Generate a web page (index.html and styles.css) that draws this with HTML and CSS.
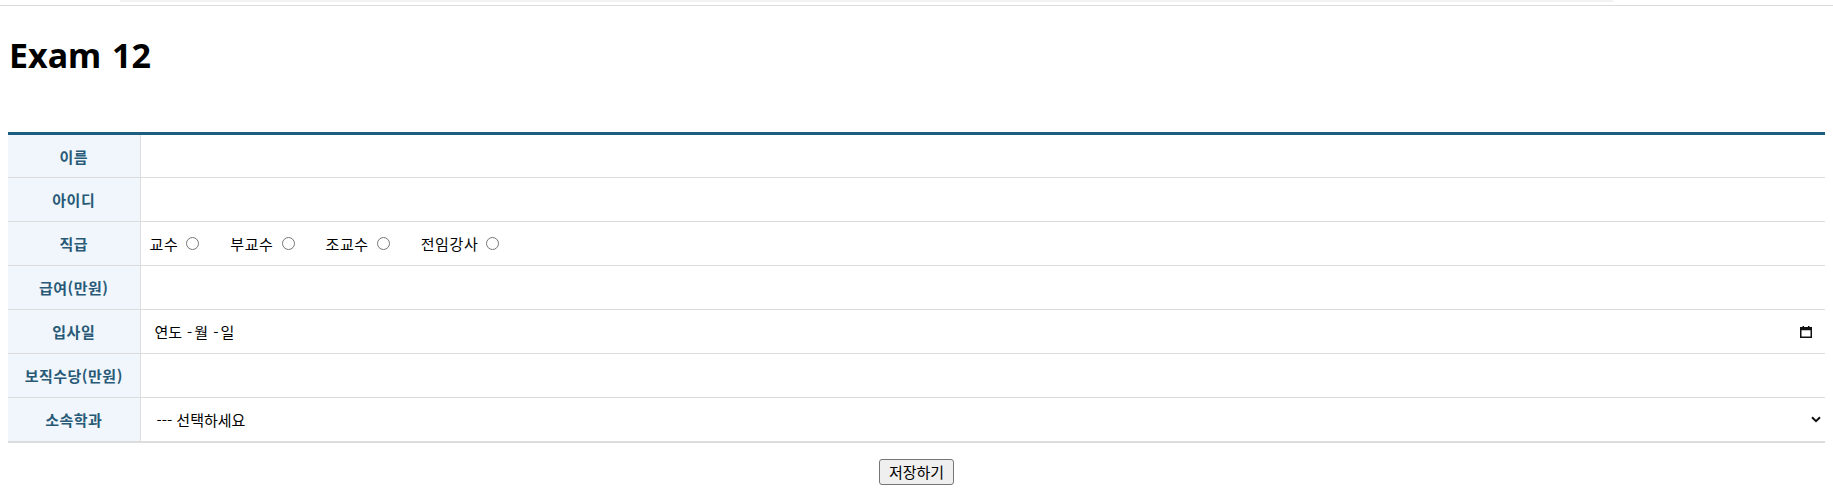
FILE: index.html
```html
<!DOCTYPE html>
<html lang="ko">
<head>
<meta charset="utf-8">
<title>Exam 12</title>
<link rel="stylesheet" href="styles.css">
</head>
<body>
<div class="topbar"><div class="topbar-strip"></div></div>
<main class="page">
  <h1 class="title">Exam 12</h1>
  <form class="form">
    <table class="form-table">
      <tr>
        <th>이름</th>
        <td><input type="text" class="field"></td>
      </tr>
      <tr>
        <th>아이디</th>
        <td><input type="text" class="field"></td>
      </tr>
      <tr>
        <th>직급</th>
        <td>
          <div class="radios">
            <label class="radio">교수<input type="radio" name="pos"></label>
            <label class="radio">부교수<input type="radio" name="pos"></label>
            <label class="radio">조교수<input type="radio" name="pos"></label>
            <label class="radio">전임강사<input type="radio" name="pos"></label>
          </div>
        </td>
      </tr>
      <tr>
        <th>급여(만원)</th>
        <td><input type="text" class="field"></td>
      </tr>
      <tr>
        <th>입사일</th>
        <td class="cell-date">
          <div class="date">
            <span class="date-text">연도<span class="date-sep">-</span>월<span class="date-sep">-</span>일</span>
            <svg class="date-icon" width="12" height="12" viewBox="0 0 12 12" aria-hidden="true">
              <rect x="0.75" y="1.75" width="10.5" height="9.5" fill="none" stroke="#111" stroke-width="1.5"/>
              <rect x="0.75" y="1.75" width="10.5" height="2.5" fill="#111"/>
              <rect x="2.5" y="0" width="1.5" height="2" fill="#111"/>
              <rect x="8" y="0" width="1.5" height="2" fill="#111"/>
            </svg>
          </div>
        </td>
      </tr>
      <tr>
        <th>보직수당(만원)</th>
        <td><input type="text" class="field"></td>
      </tr>
      <tr>
        <th>소속학과</th>
        <td class="cell-select">
          <div class="select-wrap">
            <select class="select">
              <option>--- 선택하세요</option>
            </select>
            <svg class="chevron" width="10" height="7" viewBox="0 0 10 7" aria-hidden="true">
              <path d="M1 1.2 L5 5.2 L9 1.2" fill="none" stroke="#111" stroke-width="2"/>
            </svg>
          </div>
        </td>
      </tr>
    </table>
    <div class="actions">
      <button type="submit" class="btn">저장하기</button>
    </div>
  </form>
</main>
</body>
</html>
```

FILE: styles.css
```css
html, body {
  margin: 0;
  padding: 0;
  background: #fff;
}

body {
  font-family: "Noto Sans CJK KR", "Noto Sans", sans-serif;
  color: #000;
}

.topbar {
  height: 5px;
  border-bottom: 1px solid #dcdcdc;
  padding-left: 120px;
}

.topbar-strip {
  width: 1493px;
  height: 2px;
  background: #f3f3f3;
}

.page {
  padding: 0 8px;
}

.title {
  font-family: "Noto Sans", "Noto Sans CJK KR", sans-serif;
  font-size: 34px;
  font-weight: 700;
  word-spacing: 2px;
  margin: 26px 0 54px 1px;
}

.form-table {
  width: 100%;
  border-collapse: collapse;
  border-top: 3px solid #1b5e7f;
  border-bottom: 2px solid #dcdcdc;
}

.form-table th,
.form-table td {
  height: 44px;
  padding: 0;
  border-bottom: 1px solid #dcdcdc;
  box-sizing: border-box;
}

.form-table th {
  width: 132px;
  background: #f0f6fb;
  color: #285a78;
  font-size: 15px;
  font-weight: 700;
  letter-spacing: 0.5px;
  text-align: center;
  border-right: 1px solid #dcdcdc;
}

.form-table td {
  padding: 0 8px 0 9px;
  font-size: 15px;
}

.field {
  display: block;
  width: 100%;
  border: none;
  background: transparent;
  font: inherit;
  padding: 2px 0;
  outline: none;
}

.radios {
  display: flex;
  align-items: center;
  gap: 31px;
}

.radio {
  display: flex;
  align-items: center;
  letter-spacing: 0.6px;
}

.radio input {
  width: 13px;
  height: 13px;
  margin: 0 0 0 8px;
}

.date {
  display: flex;
  align-items: center;
  justify-content: space-between;
  padding-left: 5px;
}

.date-sep {
  margin: 0 2px 0 5px;
}

.date-icon {
  margin-right: 5px;
}

.cell-select {
  padding-right: 4px !important;
}

.select-wrap {
  display: flex;
  align-items: center;
}

.select {
  flex: 1;
  appearance: none;
  -webkit-appearance: none;
  border: none;
  background: transparent;
  font: inherit;
  font-size: 15px;
  color: #000;
  padding: 2px 0 2px 7px;
  outline: none;
}

.chevron {
  flex: none;
}

.actions {
  display: flex;
  justify-content: center;
  margin-top: 16px;
}

.btn {
  font-family: "Noto Sans CJK KR", sans-serif;
  font-size: 15px;
  line-height: 22px;
  padding: 1px 9px;
  border: 1px solid #767676;
  border-radius: 3px;
  background: #efefef;
  color: #000;
}
```
